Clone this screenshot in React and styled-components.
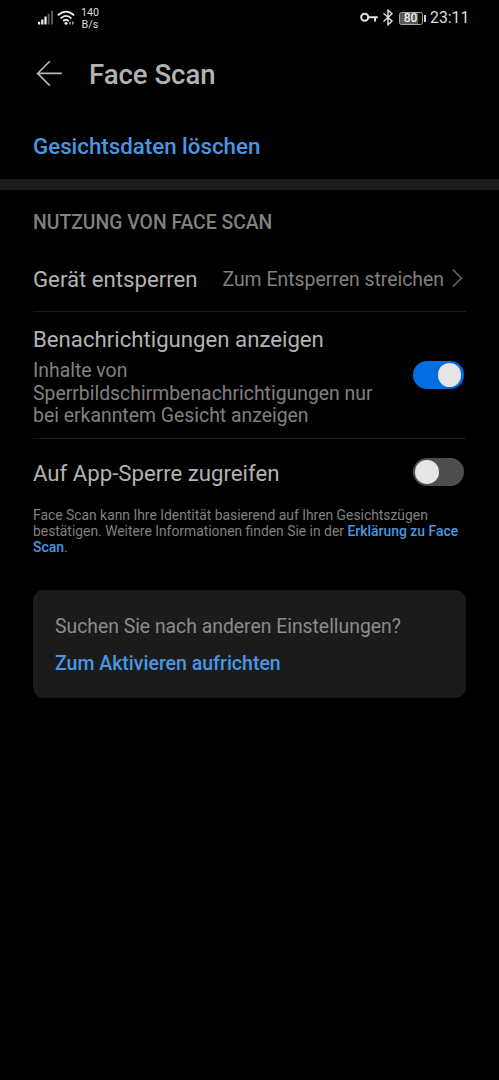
import React from "react";
import styled, { createGlobalStyle } from "styled-components";

const GlobalStyle = createGlobalStyle`
  body { margin: 0; background: #000; }
  *, *::before, *::after { box-sizing: border-box; }
`;

const Screen = styled.main`
  width: 100%;
  min-height: 1080px;
  display: flex;
  flex-direction: column;
  background: #000;
  color: #b3b3b3;
  font-family: Roboto, "Liberation Sans", sans-serif;
`;

const StatusBar = styled.header`
  height: 36px;
  padding: 0 31px 0 37px;
  display: flex;
  justify-content: space-between;
  align-items: center;
  color: #dedede;
`;

const StatusGroup = styled.div`
  height: 36px;
  display: flex;
  align-items: center;
`;

const NetSpeed = styled.div`
  width: 20px;
  margin-left: 3px;
  padding-top: 1px;
  font-size: 10.8px;
  line-height: 12px;
  text-align: center;
`;

const Battery = styled.div`
  width: 24px;
  height: 13px;
  margin: 0 1.5px 0 5px;
  border: 1px solid #a8a8a8;
  border-radius: 2.5px;
  background: linear-gradient(90deg, #575757 80%, #111 80%);
  background-clip: padding-box;
  font-size: 12px;
  font-weight: 500;
  line-height: 11px;
  text-align: center;
  color: #f0f0f0;
`;

const BatteryTip = styled.div`
  width: 2px;
  height: 7px;
  margin-right: 4px;
  background: #cfcfcf;
`;

const Clock = styled.time`
  width: 38px;
  font-size: 15.8px;
  line-height: 18px;
  white-space: nowrap;
`;

const TitleBar = styled.div`
  height: 77px;
  padding: 0 33px;
  display: flex;
  align-items: center;
`;

const Title = styled.h1`
  margin: 0 0 0 27px;
  font-size: 27.5px;
  line-height: 32px;
  font-weight: 500;
`;

const ActionRow = styled.div`
  height: 66px;
  padding: 0 33px;
  display: flex;
  align-items: center;
`;

const Action = styled.span`
  font-size: ${(p) => p.$size}px;
  line-height: 26px;
  font-weight: 500;
  color: #4997e3;
`;

const Band = styled.div`
  height: 11px;
  background: #1b1b1b;
`;

const SectionLabel = styled.h2`
  height: 57px;
  margin: 0;
  padding: 21px 33px 0;
  font-size: 19.35px;
  line-height: 23px;
  font-weight: 500;
  color: #808080;
`;

const List = styled.section`
  margin: 0 33px;
`;

const Row = styled.div`
  height: ${(p) => p.$height}px;
  padding-right: ${(p) => p.$inset || 0}px;
  display: flex;
  align-items: center;
  justify-content: space-between;
  border-bottom: ${(p) => (p.$last ? "none" : "1px solid #1c1c1c")};
`;

const Label = styled.div`
  padding-top: ${(p) => p.$drop || 0}px;
  font-size: 22.2px;
  line-height: 26px;
  white-space: nowrap;
`;

const LabelGroup = styled.div`
  padding-top: 4px;
`;

const Value = styled.div`
  display: flex;
  align-items: center;
  font-size: 19.4px;
  line-height: 23px;
  color: #808080;
  white-space: nowrap;
`;

const Description = styled.p`
  width: 345px;
  margin: 8px 0 0;
  font-size: 19.4px;
  line-height: 22.6px;
  color: #808080;
`;

const Toggle = styled.div`
  flex: none;
  width: 51px;
  height: 28px;
  padding: 2px 2.5px;
  display: flex;
  justify-content: ${(p) => (p.$on ? "flex-end" : "flex-start")};
  align-items: center;
  border-radius: 14px;
  background: ${(p) => (p.$on ? "#006de0" : "#4d4d4d")};
`;

const Knob = styled.span`
  width: 23.5px;
  height: 23.5px;
  border-radius: 50%;
  background: #e5e5e5;
`;

const Footnote = styled.p`
  width: 440px;
  margin: 2px 0 0 33px;
  font-size: 13.87px;
  line-height: 16.2px;
  color: #808080;
`;

const Link = styled.span`
  font-size: 13.93px;
  font-weight: 500;
  color: #4997e3;
`;

const Card = styled.section`
  height: 108px;
  margin: 34px 33px 0;
  padding: 25px 22px;
  border-radius: 11px;
  background: #1b1b1b;
`;

const CardText = styled.div`
  margin-bottom: 13px;
  font-size: 19.35px;
  line-height: 23px;
  color: #8c8c8c;
`;

const SignalIcon = () => (
  <svg width="17" height="16" viewBox="0 0 17 16">
    <path d="M1 11.8h2.2v2.7H1zM4.2 9.5h2.2v5H4.2zM7.4 6.6h2.2v7.9H7.4z" fill="#f2f2f2" />
    <path d="M10.7 3.8h2v10.7h-2zM14 .8h2v13.7h-2z" fill="#555" />
  </svg>
);

const WifiIcon = () => (
  <svg width="20" height="16" viewBox="0 0 20 16" style={{ marginLeft: 3 }}>
    <g fill="none" stroke="#ededed" strokeWidth="1.8">
      <path d="M.8 5.4Q9 -2.2 17.2 5.4M3.6 8.4Q9 3.3 14.4 8.4M6.2 11.1Q9 8.4 11.8 11.1" />
    </g>
    <circle cx="9" cy="13.3" r="1.5" fill="#ededed" />
    <path d="M13.7 11v4l-2-2zM15.2 11v4l2-2z" fill="#b5b5b5" />
  </svg>
);

const KeyIcon = () => (
  <svg width="19" height="12" viewBox="0 0 19 12" fill="none" stroke="#e2e2e2" strokeWidth="2">
    <circle cx="4.7" cy="5.2" r="3.5" />
    <path d="M8.2 5.2H17.8M15 5.2v4.2" />
  </svg>
);

const BluetoothIcon = () => (
  <svg width="12" height="18" viewBox="0 0 12 18" fill="none" stroke="#e2e2e2" strokeWidth="1.4" style={{ marginLeft: 3 }}>
    <path d="M1.5 4.3L10 12L6 15.6V1.2L10 4.8L1.5 12.5" />
  </svg>
);

const BackIcon = () => (
  <svg width="29" height="30" viewBox="0 0 29 30" fill="none" stroke="#b5b5b5" strokeWidth="1.6">
    <path d="M28.8 13.4H4.6M16.8 1.2L4.6 13.4L16.8 25.6" />
  </svg>
);

const Chevron = () => (
  <svg width="14" height="20" viewBox="0 0 14 20" fill="none" stroke="#5e5e5e" strokeWidth="1.7" style={{ marginLeft: 8 }}>
    <path d="M.9 .7L9.4 9.2L.9 17.7" />
  </svg>
);

export default function App() {
  return (
    <>
      <GlobalStyle />
      <Screen>
        <StatusBar>
          <StatusGroup>
            <SignalIcon />
            <WifiIcon />
            <NetSpeed>140<br />B/s</NetSpeed>
          </StatusGroup>
          <StatusGroup>
            <KeyIcon />
            <BluetoothIcon />
            <Battery>80</Battery>
            <BatteryTip />
            <Clock>23:11</Clock>
          </StatusGroup>
        </StatusBar>
        <TitleBar>
          <BackIcon />
          <Title>Face Scan</Title>
        </TitleBar>
        <ActionRow>
          <Action $size={22.3}>Gesichtsdaten löschen</Action>
        </ActionRow>
        <Band />
        <SectionLabel>NUTZUNG VON FACE SCAN</SectionLabel>
        <List>
          <Row $height={65}>
            <Label>Gerät entsperren</Label>
            <Value>Zum Entsperren streichen<Chevron /></Value>
          </Row>
          <Row $height={127} $inset={2.4}>
            <LabelGroup>
              <Label>Benachrichtigungen anzeigen</Label>
              <Description>
                Inhalte von<br />Sperrbildschirmbenachrichtigungen nur<br />bei erkanntem Gesicht anzeigen
              </Description>
            </LabelGroup>
            <Toggle $on><Knob /></Toggle>
          </Row>
          <Row $height={66} $inset={2.4} $last>
            <Label $drop={2}>Auf App-Sperre zugreifen</Label>
            <Toggle><Knob /></Toggle>
          </Row>
        </List>
        <Footnote>
          Face Scan kann Ihre Identität basierend auf Ihren Gesichtszügen<br />
          bestätigen. Weitere Informationen finden Sie in der <Link>Erklärung zu Face<br />Scan</Link>.
        </Footnote>
        <Card>
          <CardText>Suchen Sie nach anderen Einstellungen?</CardText>
          <Action $size={19.5}>Zum Aktivieren aufrichten</Action>
        </Card>
      </Screen>
    </>
  );
}
